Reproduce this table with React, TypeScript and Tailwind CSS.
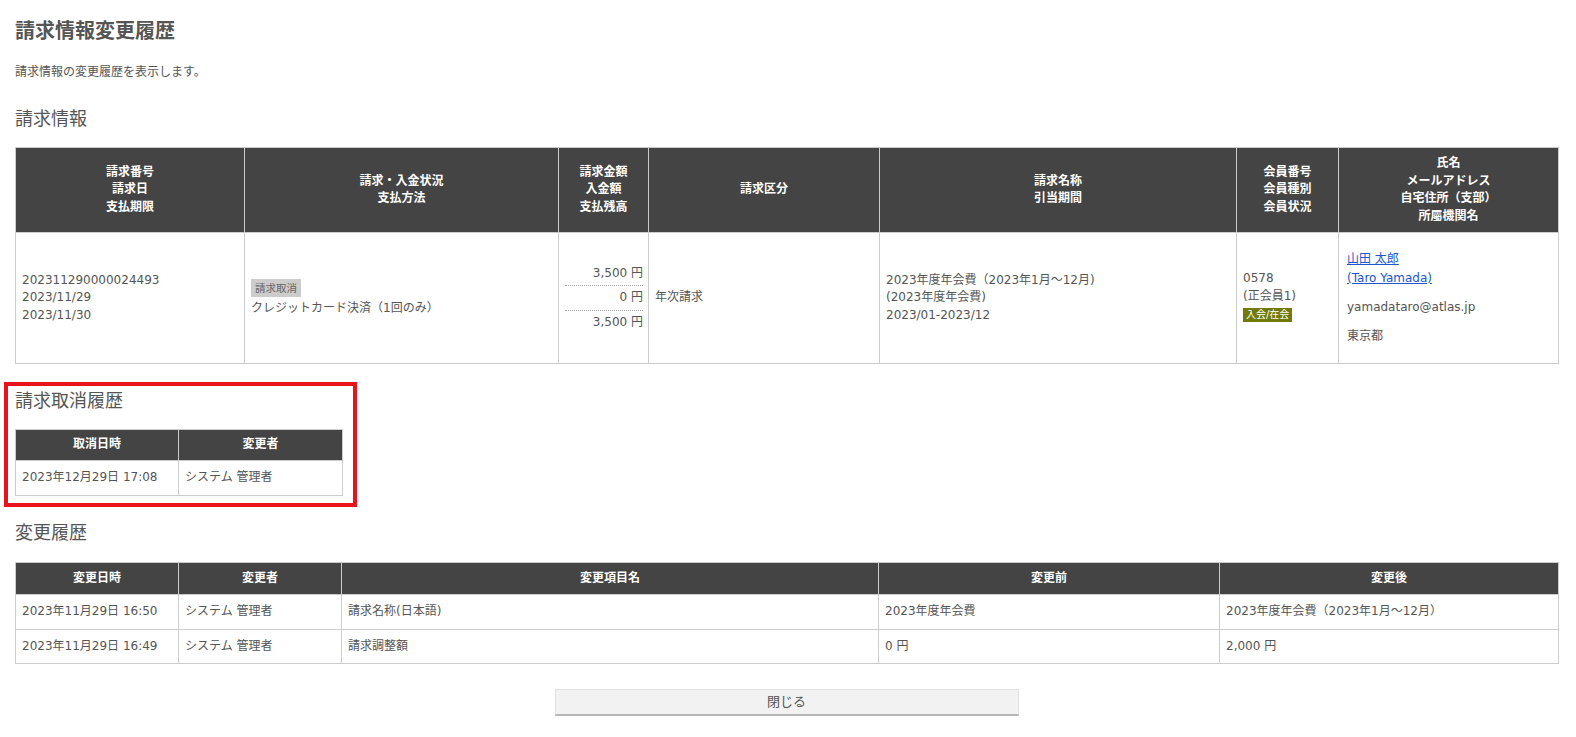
import React from "react";

const th =
  "border border-[#ccc] bg-[#444] px-[6px] text-center align-middle text-[12px] font-bold leading-[17.5px] text-white";
const td = "border border-[#ccc] px-[6px] align-middle text-[12px] leading-[17.5px] text-[#555]";

function SectionTitle({ children, className = "" }: { children: React.ReactNode; className?: string }) {
  return <h2 className={`text-[18px] font-normal leading-[24px] text-[#555] ${className}`}>{children}</h2>;
}

function Amount({ value, last }: { value: string; last?: boolean }) {
  return (
    <div className={`py-[3px] text-right leading-[17.5px] ${last ? "" : "border-b border-dotted border-[#aaa]"}`}>
      {value}
    </div>
  );
}

export default function App() {
  const history = [
    {
      at: "2023年11月29日 16:50",
      by: "システム 管理者",
      item: "請求名称(日本語)",
      before: "2023年度年会費",
      after: "2023年度年会費（2023年1月～12月）",
    },
    {
      at: "2023年11月29日 16:49",
      by: "システム 管理者",
      item: "請求調整額",
      before: "0 円",
      after: "2,000 円",
    },
  ];

  return (
    <div className="min-h-screen bg-white pl-[15px] pr-[18px] pt-[17px] pb-[21px] font-['DejaVu_Sans','Noto_Sans_CJK_JP',sans-serif] text-[#555]">
      <h1 className="text-[20px] font-bold leading-[28px] text-[#555]">請求情報変更履歴</h1>
      <p className="mt-[18px] text-[12px] leading-[18px]">請求情報の変更履歴を表示します。</p>

      <SectionTitle className="mt-[26px]">請求情報</SectionTitle>
      <table className="mt-[16px] w-full table-fixed border-collapse">
        <colgroup>
          <col className="w-[229px]" />
          <col className="w-[314px]" />
          <col className="w-[90px]" />
          <col className="w-[231px]" />
          <col className="w-[357px]" />
          <col className="w-[102px]" />
          <col className="w-[220px]" />
        </colgroup>
        <thead>
          <tr className="h-[85px]">
            <th className={th}>
              請求番号
              <br />
              請求日
              <br />
              支払期限
            </th>
            <th className={th}>
              請求・入金状況
              <br />
              支払方法
            </th>
            <th className={th}>
              請求金額
              <br />
              入金額
              <br />
              支払残高
            </th>
            <th className={th}>請求区分</th>
            <th className={th}>
              請求名称
              <br />
              引当期間
            </th>
            <th className={th}>
              会員番号
              <br />
              会員種別
              <br />
              会員状況
            </th>
            <th className={th}>
              氏名
              <br />
              メールアドレス
              <br />
              自宅住所（支部）
              <br />
              所屬機関名
            </th>
          </tr>
        </thead>
        <tbody>
          <tr className="h-[131px]">
            <td className={td}>
              202311290000024493
              <br />
              2023/11/29
              <br />
              2023/11/30
            </td>
            <td className={td}>
              <span className="inline-block bg-[#ccc] px-[4px] text-[10.5px] leading-[18px] text-[#666]">請求取消</span>
              <div className="mt-[2px]">クレジットカード決済（1回のみ）</div>
            </td>
            <td className="border border-[#ccc] pl-[6px] pr-[5px] align-middle text-[12px] text-[#555]">
              <Amount value="3,500 円" />
              <Amount value="0 円" />
              <Amount value="3,500 円" last />
            </td>
            <td className={td}>年次請求</td>
            <td className={td}>
              2023年度年会費（2023年1月～12月)
              <br />
              (2023年度年会費)
              <br />
              2023/01-2023/12
            </td>
            <td className={td}>
              <div className="pb-[4px]">
                <div className="leading-[18px]">0578</div>
                <div className="leading-[18px]">(正会員1)</div>
                <span className="mt-[3px] inline-block bg-[#6f7a08] px-[3px] text-[10px] leading-[14px] text-white">
                  入会/在会
                </span>
              </div>
            </td>
            <td className="border border-[#ccc] px-[8px] align-middle text-[12px] text-[#555]">
              <div className="leading-[19px]">
                <a href="#" className="text-[#2255cc] underline">
                  山田 太郎
                </a>
                <br />
                <a href="#" className="text-[#2255cc] underline">
                  (Taro Yamada)
                </a>
              </div>
              <div className="mt-[10px] leading-[19px]">yamadataro@atlas.jp</div>
              <div className="mt-[10px] leading-[19px]">東京都</div>
            </td>
          </tr>
        </tbody>
      </table>

      <div className="relative mt-[25px] w-[327px]">
        <SectionTitle>請求取消履歴</SectionTitle>
        <table className="mt-[16px] w-full table-fixed border-collapse">
          <colgroup>
            <col className="w-[163px]" />
            <col className="w-[164px]" />
          </colgroup>
          <thead>
            <tr className="h-[31px]">
              <th className={th}>取消日時</th>
              <th className={th}>変更者</th>
            </tr>
          </thead>
          <tbody>
            <tr className="h-[35px]">
              <td className={td}>2023年12月29日 17:08</td>
              <td className={td}>システム 管理者</td>
            </tr>
          </tbody>
        </table>
        <div className="pointer-events-none absolute bottom-[-11px] left-[-11px] right-[-15px] top-[-7px] border-[4px] border-[#e8141c]" />
      </div>

      <SectionTitle className="mt-[25px]">変更履歴</SectionTitle>
      <table className="mt-[17px] w-full table-fixed border-collapse">
        <colgroup>
          <col className="w-[163px]" />
          <col className="w-[163px]" />
          <col className="w-[537px]" />
          <col className="w-[341px]" />
          <col className="w-[339px]" />
        </colgroup>
        <thead>
          <tr className="h-[32px]">
            <th className={th}>変更日時</th>
            <th className={th}>変更者</th>
            <th className={th}>変更項目名</th>
            <th className={th}>変更前</th>
            <th className={th}>変更後</th>
          </tr>
        </thead>
        <tbody>
          {history.map((h, i) => (
            <tr key={i} className="h-[34.5px]">
              <td className={td}>{h.at}</td>
              <td className={td}>{h.by}</td>
              <td className={td}>{h.item}</td>
              <td className={td}>{h.before}</td>
              <td className={td}>{h.after}</td>
            </tr>
          ))}
        </tbody>
      </table>

      <div className="mt-[25px] flex justify-center">
        <button
          type="button"
          className="h-[27px] w-[464px] border border-[#e0e0e0] border-b-[2px] border-b-[#b5b5b5] bg-[#f2f2f2] text-[13px] text-[#555]"
        >
          閉じる
        </button>
      </div>
    </div>
  );
}
